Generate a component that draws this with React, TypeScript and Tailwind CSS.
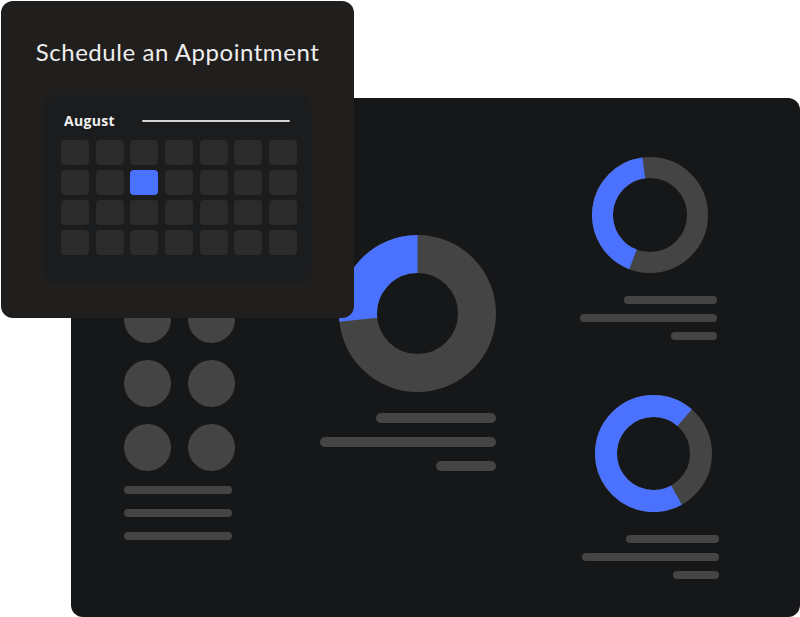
import React from "react";

type Seg = { from: number; to: number; color: string };

// angles in degrees, clockwise from 12 o'clock
const pt = (cx: number, cy: number, r: number, a: number) => {
  const rad = ((a - 90) * Math.PI) / 180;
  return [cx + r * Math.cos(rad), cy + r * Math.sin(rad)];
};

const arc = (cx: number, cy: number, r: number, a0: number, a1: number) => {
  const [x0, y0] = pt(cx, cy, r, a0);
  const [x1, y1] = pt(cx, cy, r, a1);
  const large = a1 - a0 > 180 ? 1 : 0;
  return `M ${x0} ${y0} A ${r} ${r} 0 ${large} 1 ${x1} ${y1}`;
};

const Donut = ({ size, thick, segs }: { size: number; thick: number; segs: Seg[] }) => {
  const c = size / 2;
  const r = c - thick / 2;
  return (
    <svg width={size} height={size} viewBox={`0 0 ${size} ${size}`} className="block shrink-0">
      <circle cx={c} cy={c} r={r} fill="none" stroke="#444444" strokeWidth={thick} />
      {segs.map((s, i) => (
        <path key={i} d={arc(c, c, r, s.from, s.to)} fill="none" stroke={s.color} strokeWidth={thick} />
      ))}
    </svg>
  );
};

const Bar = ({ w, h = 8 }: { w: number; h?: number }) => (
  <div className="rounded-full bg-[#444444]" style={{ width: w, height: h }} />
);

const BLUE = "#4b72fe";

export default function App() {
  const cells = Array.from({ length: 28 }, (_, i) => i);

  return (
    <div className="relative w-[800px] h-[617px] bg-white overflow-hidden" style={{ fontFamily: "Lato, 'Open Sans', sans-serif" }}>
      {/* main dashboard panel */}
      <div className="ml-[71px] mt-[98px] w-[729px] h-[519px] rounded-[12px] bg-[#161719] flex pl-[53px]">
        {/* left column */}
        <div className="w-[111px] mt-[198px] flex flex-col">
          <div className="grid grid-cols-2 gap-x-[17px] gap-y-[17px] w-[111px]">
            {[0, 1, 2, 3, 4, 5].map((i) => (
              <div key={i} className="w-[47px] h-[47px] rounded-full bg-[#444444]" />
            ))}
          </div>
          <div className="mt-[15px] flex flex-col gap-[15px]">
            <Bar w={108} />
            <Bar w={108} />
            <Bar w={108} />
          </div>
        </div>

        {/* center column */}
        <div className="ml-[85px] w-[176px] mt-[137px] flex flex-col items-end">
          <Donut size={157} thick={38} segs={[{ from: 264, to: 360, color: BLUE }]} />
          <div className="mt-[21px] flex flex-col items-end gap-[14px]">
            <Bar w={120} h={10} />
            <Bar w={176} h={10} />
            <Bar w={60} h={10} />
          </div>
        </div>

        {/* right column */}
        <div className="ml-[84px] w-[139px] mt-[59px] flex flex-col">
          <div className="flex flex-col items-end pr-[2px]">
            <div className="mr-[9px]">
              <Donut size={116} thick={21} segs={[{ from: 201, to: 352.5, color: BLUE }]} />
            </div>
            <div className="mt-[23px] flex flex-col items-end gap-[10px]">
              <Bar w={93} />
              <Bar w={137} />
              <Bar w={46} />
            </div>
          </div>
          <div className="mt-[55px] flex flex-col items-end">
            <div className="mr-[7px]">
              <Donut size={117} thick={22} segs={[{ from: 151, to: 401, color: BLUE }]} />
            </div>
            <div className="mt-[23px] flex flex-col items-end gap-[10px]">
              <Bar w={93} />
              <Bar w={137} />
              <Bar w={46} />
            </div>
          </div>
        </div>
      </div>

      {/* appointment card overlapping */}
      <div className="absolute left-[1px] top-[1px] w-[353px] h-[317px] rounded-[12px] bg-[#211f1d] flex flex-col items-center">
        <h1 className="mt-[36px] text-[24px] leading-[30px] font-normal text-[#eeeeee] tracking-[0.55px]">
          Schedule an Appointment
        </h1>
        <div className="mt-[28px] self-start ml-[43px] w-[268px] h-[188px] rounded-[12px] bg-[#1b1c1e] flex flex-col">
          <div className="flex items-center mt-[17px] ml-[20px] h-[18px]">
            <span
              className="w-[78px] text-[14px] font-bold text-[#f0f0f0] leading-none tracking-[0.3px]"
              style={{ fontFamily: "'Open Sans', sans-serif" }}
            >
              August
            </span>
            <div className="w-[148px] h-[2px] rounded-full bg-[#d4d4d4]" />
          </div>
          <div className="mt-[10px] ml-[17px] w-[236px] grid grid-cols-7 gap-x-[6.4px] gap-y-[5px]">
            {cells.map((i) => (
              <div key={i} className={`h-[25px] rounded-[4px] ${i === 9 ? "bg-[#4b72fe]" : "bg-[#2b2b2b]"}`} />
            ))}
          </div>
        </div>
      </div>
    </div>
  );
}
